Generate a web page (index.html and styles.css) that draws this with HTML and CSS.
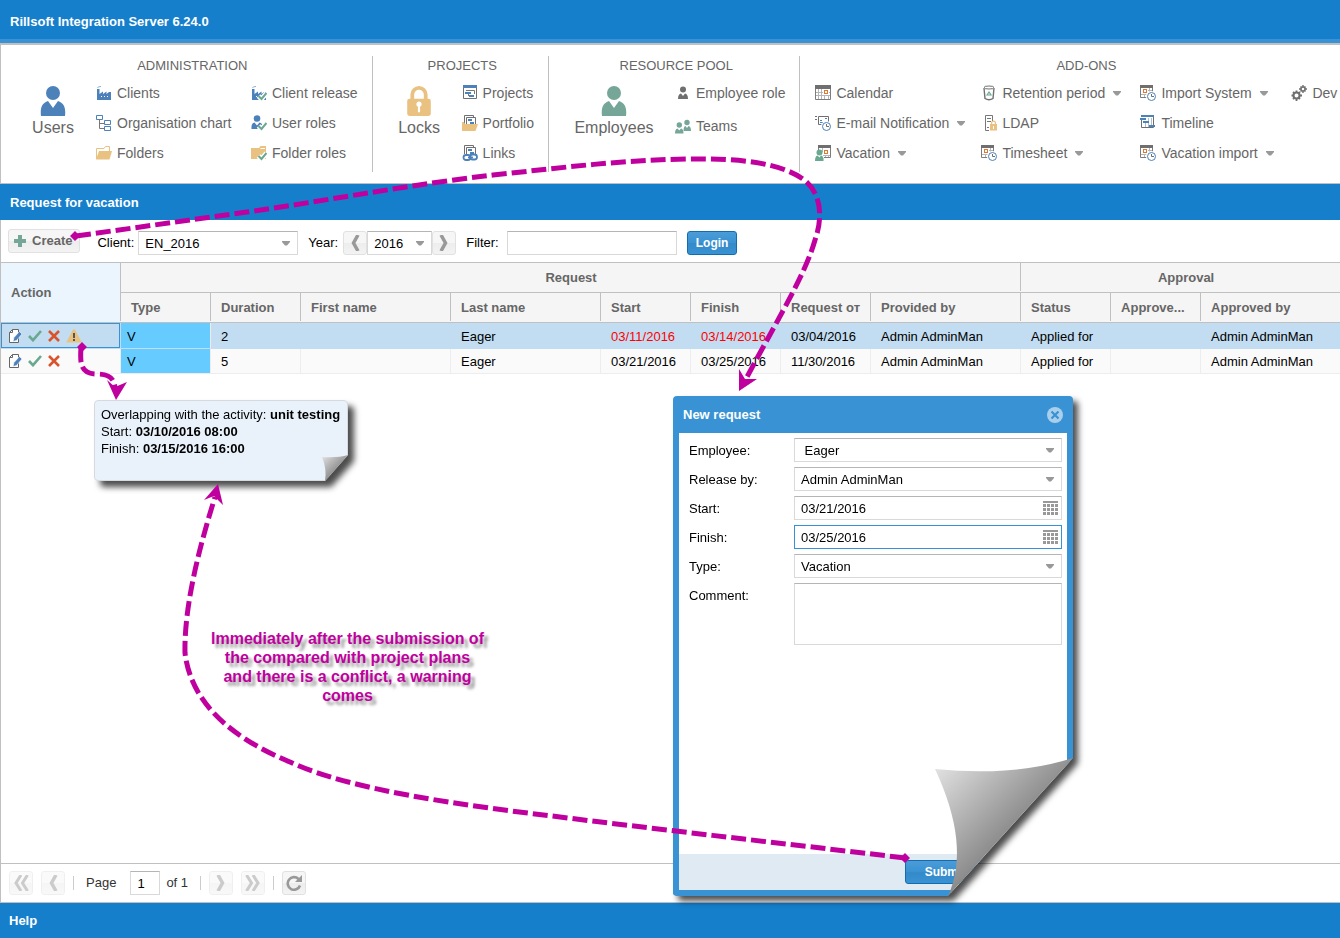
FILE: index.html
```html
<!DOCTYPE html>
<html lang="en">
<head>
<meta charset="utf-8">
<title>Rillsoft Integration Server</title>
<link rel="stylesheet" href="styles.css">
</head>
<body>
<svg class="sprite" aria-hidden="true">
  <symbol id="person" viewBox="0 0 26 30">
    <circle cx="13" cy="7" r="7"/>
    <path d="M1 30C0 22 2 17 8 15L13 22L18 15C24 17 26 22 25 30Q13 31 1 30Z"/>
  </symbol>
  <symbol id="lock" viewBox="0 0 22 28">
    <path d="M3 12V8A8 8 0 0 1 19 8V12H20Q22 12 22 14V26Q22 28 20 28H2Q0 28 0 26V14Q0 12 2 12ZM6.500 12H15.500V8A4.500 4.500 0 0 0 6.500 8ZM11 14.500A2.500 2.500 0 0 0 10 19.300V24.500H12V19.300A2.500 2.500 0 0 0 11 14.500Z" fill-rule="evenodd"/>
  </symbol>
  <symbol id="factory" viewBox="0 0 16 16">
    <path fill="#4c81ba" d="M1 15V4H3.500V9L7 6.500V9L10.500 6.500V9L13 7H15V15Z"/>
    <path fill="none" stroke="#8fb0d4" d="M1.500 3Q1.500 1.500 5 1.500"/>
    <path fill="#fff" d="M5 11H6V12H5ZM8 11H9V12H8ZM11 11H12V12H11Z"/>
  </symbol>
  <symbol id="tick" viewBox="0 0 16 16">
    <path fill="none" stroke="#fff" stroke-width="5" d="M7.500 11L10.500 14L15.500 8"/>
    <path fill="none" stroke="#6aa88f" stroke-width="2" d="M7.500 11L10.500 14L15.500 8"/>
  </symbol>
  <symbol id="tree" viewBox="0 0 16 16">
    <path fill="none" stroke="#777" d="M3.500 4V13.500H8M3.500 8.500H8"/>
    <path fill="#fff" stroke="#4c81ba" d="M.5 .5H6.500V4.500H.5ZM8.500 5.500H14.500V9.500H8.500ZM8.500 11.500H14.500V15.500H8.500Z"/>
  </symbol>
  <symbol id="folder" viewBox="0 0 16 16">
    <path fill="none" stroke="#e9c282" d="M.5 14V3.500H8L9.500 1.500H13.500V6"/>
    <path fill="#e9c282" d="M0 14.500L3 6H16L13.500 14.500Z"/>
  </symbol>
  <symbol id="folder-full" viewBox="0 0 16 16">
    <path fill="#e9c282" d="M0 14V3H8L9.500 1H15V14Z"/>
    <path fill="none" stroke="#fff" d="M9.500 3.500H14"/>
  </symbol>
  <symbol id="small-user" viewBox="0 0 16 16">
    <circle cx="6" cy="3.500" r="3.300"/>
    <path d="M.5 14Q0 8 3.500 7.500L6 10.500L8.500 7.500Q12 8 11.500 14Z"/>
  </symbol>
  <symbol id="project" viewBox="0 0 16 16">
    <path fill="#fff" stroke="#707070" d="M1.500 3V13.500H14.500V3"/>
    <path fill="#4c81ba" d="M1 0H15V3H1ZM3 7H9V9H3ZM7 10H12V12H7Z"/>
    <path fill="none" stroke="#777" d="M4 5.500H12.500V9M6.500 9V11"/>
  </symbol>
  <symbol id="docs" viewBox="0 0 16 16">
    <path fill="#fff" stroke="#707070" d="M2.500 10V.5H11.500V3M4.500 12V2.500H13.500V12Z"/>
    <path fill="#4c81ba" d="M6 4H10V6H6ZM8 7H12V9H8Z"/>
  </symbol>
  <symbol id="portfolio" viewBox="0 0 16 16">
    <use href="#docs"/>
    <path fill="#e9c282" d="M0 7H2L3 9H16L13.500 16H0Z"/>
  </symbol>
  <symbol id="links" viewBox="0 0 16 16">
    <use href="#docs"/>
    <path fill="none" stroke="#fff" stroke-width="7" d="M2 12.500H15"/>
    <g fill="none" stroke="#4c81ba" stroke-width="1.800"><rect x="1.500" y="10" width="7" height="5" rx="2.500"/><rect x="8" y="9.500" width="7" height="5" rx="2.500"/><path d="M6 12.500H11"/></g>
  </symbol>
  <symbol id="role" viewBox="0 0 16 16">
    <g fill="#6f6f6f"><circle cx="8" cy="4.500" r="3"/><path d="M3 14Q3 9 6 8.500L8 11L10 8.500Q13 9 13 14Z"/></g>
  </symbol>
  <symbol id="team" viewBox="0 0 16 16">
    <g fill="#75a697"><circle cx="4.300" cy="7" r="2.700"/><path d="M0 15.500Q0 11 2.500 10.500L4.300 12.500L6 10.500Q8.500 11 8.500 15.500Z"/><circle cx="12" cy="4.500" r="2.700"/><path d="M8.500 13Q8.500 8.500 10.500 8L12 10L13.500 8Q16 8.500 16 13Z"/></g>
  </symbol>
  <symbol id="calendar" viewBox="0 0 16 16">
    <path fill="#6f6f6f" d="M0 0H16V4H0Z"/>
    <path fill="none" stroke="#b5b5b5" d="M1 7.500H15M1 10.500H15M3.500 4V14M6.500 4V14M9.500 4V14M13.500 4V14"/>
    <path fill="none" stroke="#7c7c7c" d="M.5 4V14.500H15.500V4"/>
    <path fill="#fff" d="M8 4H14V10H8Z"/>
    <rect x="9.500" y="5.500" width="3" height="3" fill="#fff" stroke="#e0762f"/>
  </symbol>
  <symbol id="clock" viewBox="0 0 16 16">
    <circle cx="11.500" cy="11.500" r="5.500" fill="#fff"/>
    <circle cx="11.500" cy="11.500" r="4" fill="#fff" stroke="#4c81ba"/>
    <path fill="none" stroke="#6f6f6f" d="M11.500 9V11.500H14"/>
  </symbol>
  <symbol id="cal-clock" viewBox="0 0 16 16">
    <path fill="#6f6f6f" d="M0 0H13V3H0Z"/>
    <path fill="none" stroke="#7c7c7c" d="M.5 3V12.500H9M12.500 3V8"/>
    <path fill="none" stroke="#b5b5b5" d="M1 9.500H8M8 5.500H12M9.500 3V7M4.500 9V12M7.500 9V12"/>
    <rect x="3.500" y="4.500" width="3" height="3" fill="#fff" stroke="#e0762f"/>
    <use href="#clock"/>
  </symbol>
  <symbol id="mail" viewBox="0 0 16 16">
    <path stroke="#6f6f6f" d="M0 1.500H2M0 4.500H2"/>
    <path fill="#fff" stroke="#6f6f6f" d="M3.500 1.500H13.500V9.500H3.500Z"/>
    <path fill="none" stroke="#4c81ba" d="M5 5.500H7M5 7.500H8M10 3.500H12"/>
    <use href="#clock"/>
  </symbol>
  <symbol id="vac" viewBox="0 0 16 16">
    <path fill="#6f6f6f" d="M3 0H16V3H3Z"/>
    <path fill="none" stroke="#7c7c7c" d="M15.500 3V12.500H9M3.500 3V5"/>
    <path fill="none" stroke="#b5b5b5" d="M7.500 3V7M8 10.500H15M10.500 10V12M13.500 10V12"/>
    <rect x="9.500" y="5.500" width="3" height="3" fill="#fff" stroke="#e0762f"/>
    <g fill="#6aa88f"><circle cx="4.500" cy="7.500" r="3"/><path d="M0 16Q0 11 2.500 10.500L4.500 12.500L6 10.500Q9 11 8.500 16Z"/></g>
  </symbol>
  <symbol id="bin" viewBox="0 0 16 16">
    <path fill="none" stroke="#707070" stroke-width="1.400" d="M3 3L4 13.500Q8 16 12 13.500L13 3"/>
    <ellipse cx="8" cy="2.500" rx="5" ry="1.500" fill="#fff" stroke="#707070"/>
    <path fill="none" stroke="#6aa88f" stroke-width="1.200" d="M6 10L8 7L10 10Z"/>
  </symbol>
  <symbol id="ldap" viewBox="0 0 16 16">
    <path fill="none" stroke="#777" d="M11.500 6V.5H4.500V15.500H8"/>
    <path stroke="#777" d="M6 3.500H10M6 6.500H10M6 12.500H8"/>
    <path fill="#e9c282" d="M9 15.500V9H10V8A2.500 2.500 0 0 1 15 8V9H16V15.500ZM11.200 9H13.800V8A1.300 1.300 0 0 0 11.200 8ZM12 11V14H13V11Z" fill-rule="evenodd"/>
  </symbol>
  <symbol id="timeline" viewBox="0 0 16 16">
    <path fill="#fff" stroke="#6f6f6f" d="M1.500 5V12.500H13.500V2"/>
    <path fill="none" stroke="#a9bdd3" d="M5.500 8V12M8.500 3V12M11.500 3V12"/>
    <path fill="#4c81ba" d="M1 0H14V2H1ZM0 3H6V5H0ZM3 6H9V8H3ZM9 10H15V12H9Z"/>
  </symbol>
  <symbol id="gears" viewBox="0 0 16 16">
    <g fill="none" stroke="#6f6f6f"><circle cx="5.500" cy="10.500" r="3" stroke-width="2"/><path stroke-width="1.800" d="M5.500 5.500V7.500M5.500 13.500V16M.5 10.500H2.500M8.500 10.500H11M2 7L3.500 8.500M9 7L7.500 8.500M2 14L3.500 12.500M9 14L7.500 12.500"/><circle cx="12" cy="4" r="2" stroke-width="1.500"/><path stroke-width="1.400" d="M12 0V2M12 6V8M8 4H10M14 4H16M9.500 1.500L10.500 2.500M14.500 1.500L13.500 2.500M9.500 6.500L10.500 5.500M14.500 6.500L13.500 5.500"/></g>
  </symbol>
  <symbol id="arrow" viewBox="0 0 8 5"><path d="M0 0H8V1L5 4.500H3L0 1Z" fill="#999"/></symbol>
  <symbol id="chev" viewBox="0 0 16 16"><path fill="none" stroke="currentColor" stroke-width="3.500" d="M11 0L6.500 8L11 16"/></symbol>
  <symbol id="chev2" viewBox="0 0 16 16"><path fill="none" stroke="currentColor" stroke-width="3" d="M8 0L3 8L8 16M14.500 0L9.500 8L14.500 16"/></symbol>
  <symbol id="edit" viewBox="0 0 14 16">
    <path fill="#fff" stroke="#666" d="M4.500 1.500H10.500V14.500H1.500V4.500Z"/><path fill="none" stroke="#666" d="M4.500 1.500V4.500H1.500"/>
    <path fill="#4c81ba" stroke="#fff" stroke-width=".6" d="M5 13.500L6 9.500L11.500 3.500L14 6L8.500 12.500Z"/>
  </symbol>
  <symbol id="check" viewBox="0 0 14 12"><path fill="none" stroke="#6aa88f" stroke-width="2.600" d="M1 6L5 10.200L13 1"/></symbol>
  <symbol id="cross" viewBox="0 0 12 12"><path fill="none" stroke="#d9532c" stroke-width="2.600" d="M1 1L11 11M11 1L1 11"/></symbol>
  <symbol id="warn" viewBox="0 0 16 14"><path fill="#e9c282" d="M7 .5H9L15.800 13.500H.2Z"/><path fill="#555" d="M7 4H9V9H7ZM7 10H9V12H7Z"/></symbol>
  <symbol id="picker" viewBox="0 0 15 14">
    <path stroke="#999" stroke-width="2" d="M0 1H15"/><path stroke="#999" stroke-width="3" stroke-dasharray="3 1" d="M0 4.500H15M0 8.500H15M0 12.500H15"/>
  </symbol>
</svg>

<header class="bar bar-top"><h1 class="bar-title">Rillsoft Integration Server 6.24.0</h1></header>

<nav class="ribbon">
  <section class="group">
    <h2 class="group-title title-admin">Administration</h2>
    <div class="group-body cols-admin">
      <button class="big"><svg class="big-icon blue"><use href="#person"/></svg>Users</button>
      <button class="item"><svg class="icon"><use href="#factory"/></svg>Clients</button>
      <button class="item"><svg class="icon"><use href="#factory"/><use href="#tick"/></svg>Client release</button>
      <button class="item"><svg class="icon"><use href="#tree"/></svg>Organisation chart</button>
      <button class="item"><svg class="icon blue"><use href="#small-user"/><use href="#tick"/></svg>User roles</button>
      <button class="item"><svg class="icon"><use href="#folder"/></svg>Folders</button>
      <button class="item"><svg class="icon"><use href="#folder-full"/><use href="#tick"/></svg>Folder roles</button>
    </div>
  </section>
  <section class="group">
    <h2 class="group-title">Projects</h2>
    <div class="group-body cols-projects">
      <button class="big"><svg class="big-icon yellow"><use href="#lock"/></svg>Locks</button>
      <button class="item"><svg class="icon"><use href="#project"/></svg>Projects</button>
      <button class="item"><svg class="icon"><use href="#portfolio"/></svg>Portfolio</button>
      <button class="item"><svg class="icon"><use href="#links"/></svg>Links</button>
    </div>
  </section>
  <section class="group">
    <h2 class="group-title">Resource pool</h2>
    <div class="group-body cols-pool">
      <button class="big"><svg class="big-icon green"><use href="#person"/></svg>Employees</button>
      <button class="item"><svg class="icon"><use href="#role"/></svg>Employee role</button>
      <button class="item"><svg class="icon"><use href="#team"/></svg>Teams</button>
    </div>
  </section>
  <section class="group">
    <h2 class="group-title title-addons">Add-ons</h2>
    <div class="group-body cols-addons">
      <button class="item"><svg class="icon"><use href="#calendar"/></svg>Calendar</button>
      <button class="item"><svg class="icon"><use href="#bin"/></svg>Retention period<svg class="caret"><use href="#arrow"/></svg></button>
      <button class="item"><svg class="icon"><use href="#cal-clock"/></svg>Import System<svg class="caret"><use href="#arrow"/></svg></button>
      <button class="item"><svg class="icon"><use href="#gears"/></svg>Dev</button>
      <button class="item first"><svg class="icon"><use href="#mail"/></svg>E-mail Notification<svg class="caret"><use href="#arrow"/></svg></button>
      <button class="item"><svg class="icon"><use href="#ldap"/></svg>LDAP</button>
      <button class="item"><svg class="icon"><use href="#timeline"/></svg>Timeline</button>
      <button class="item first"><svg class="icon"><use href="#vac"/></svg>Vacation<svg class="caret"><use href="#arrow"/></svg></button>
      <button class="item"><svg class="icon"><use href="#cal-clock"/></svg>Timesheet<svg class="caret"><use href="#arrow"/></svg></button>
      <button class="item"><svg class="icon"><use href="#cal-clock"/></svg>Vacation import<svg class="caret"><use href="#arrow"/></svg></button>
    </div>
  </section>
</nav>

<div class="bar"><h2 class="bar-title">Request for vacation</h2></div>

<main class="panel">
  <form class="toolbar">
    <button type="button" class="btn create"><svg class="plus" viewBox="0 0 12 12"><path fill="#75a697" d="M4 0H8V4H12V8H8V12H4V8H0V4H4Z"/></svg>Create</button>
    <div class="filters">
      <label for="client">Client:</label>
      <span class="field client"><select id="client"><option>EN_2016</option></select><svg class="caret"><use href="#arrow"/></svg></span>
      <label for="year">Year:</label>
      <span class="year">
        <button type="button" class="btn square" aria-label="Previous year"><svg class="chev"><use href="#chev"/></svg></button>
        <span class="field year-field"><select id="year"><option>2016</option></select><svg class="caret"><use href="#arrow"/></svg></span>
        <button type="button" class="btn square" aria-label="Next year"><svg class="chev flip"><use href="#chev"/></svg></button>
      </span>
      <label for="filter">Filter:</label>
      <span class="field filter"><input id="filter" type="text"></span>
      <button type="button" class="btn-primary">Login</button>
    </div>
  </form>

  <div class="grid">
    <table class="requests">
      <colgroup><col class="c-action"><col class="c-s"><col class="c-s"><col class="c-l"><col class="c-l"><col class="c-s"><col class="c-s"><col class="c-s"><col class="c-l"><col class="c-s"><col class="c-s"><col class="c-l"></colgroup>
      <thead>
        <tr><th rowspan="2" class="action-head">Action</th><th colspan="8" class="span-head">Request</th><th colspan="3" class="span-head">Approval</th></tr>
        <tr><th>Type</th><th>Duration</th><th>First name</th><th>Last name</th><th>Start</th><th>Finish</th><th>Request oт</th><th>Provided by</th><th>Status</th><th>Approve...</th><th>Approved by</th></tr>
      </thead>
      <tbody>
        <tr class="selected">
          <td class="actions"><div class="action-list"><button aria-label="Edit"><svg class="i-edit"><use href="#edit"/></svg></button><button aria-label="Approve"><svg class="i-check"><use href="#check"/></svg></button><button aria-label="Reject"><svg class="i-cross"><use href="#cross"/></svg></button><button aria-label="Warning"><svg class="i-warn"><use href="#warn"/></svg></button></div></td>
          <td class="type">V</td><td>2</td><td></td><td>Eager</td><td class="late">03/11/2016</td><td class="late">03/14/2016</td><td>03/04/2016</td><td>Admin AdminMan</td><td>Applied for</td><td></td><td>Admin AdminMan</td>
        </tr>
        <tr>
          <td class="actions"><div class="action-list"><button aria-label="Edit"><svg class="i-edit"><use href="#edit"/></svg></button><button aria-label="Approve"><svg class="i-check"><use href="#check"/></svg></button><button aria-label="Reject"><svg class="i-cross"><use href="#cross"/></svg></button></div></td>
          <td class="type">V</td><td>5</td><td></td><td>Eager</td><td>03/21/2016</td><td>03/25/2016</td><td>11/30/2016</td><td>Admin AdminMan</td><td>Applied for</td><td></td><td>Admin AdminMan</td>
        </tr>
      </tbody>
    </table>
  </div>

  <div class="paging">
    <button class="btn square" disabled aria-label="First page"><svg class="chev"><use href="#chev2"/></svg></button>
    <button class="btn square" disabled aria-label="Previous page"><svg class="chev"><use href="#chev"/></svg></button>
    <span class="sep"></span>
    <label for="page">Page</label>
    <span class="field page-field"><input id="page" type="text" value="1"></span>
    <span class="page-count">of 1</span>
    <span class="sep"></span>
    <button class="btn square" disabled aria-label="Next page"><svg class="chev flip"><use href="#chev"/></svg></button>
    <button class="btn square" disabled aria-label="Last page"><svg class="chev flip"><use href="#chev2"/></svg></button>
    <span class="sep"></span>
    <button class="btn square" aria-label="Refresh"><svg class="chev" viewBox="0 0 16 16"><path fill="none" stroke="#999" stroke-width="2.600" d="M12.500 4A6.300 6.300 0 1 0 14 10.500"/><path fill="#999" d="M16 0V7H9Z"/></svg></button>
  </div>
</main>

<footer class="bar bar-help"><a class="bar-title" href="#help">Help</a></footer>

<aside class="note">
  <div class="note-paper">
    <p>Overlapping with the activity: <b>unit testing</b></p>
    <p>Start: <b>03/10/2016 08:00</b></p>
    <p>Finish: <b>03/15/2016 16:00</b></p>
  </div>
  <svg class="note-curl" viewBox="0 0 26 26"><defs><linearGradient id="g1" x1="0" y1="0" x2=".6" y2=".6"><stop offset="0" stop-color="#e6e6e6"/><stop offset="1" stop-color="#8c8c8c"/></linearGradient></defs><path fill="url(#g1)" d="M0 2Q16 3 26 0L3 26Q5 14 0 2Z"/></svg>
</aside>

<section class="dialog" role="dialog" aria-labelledby="dialog-title">
  <div class="dialog-frame">
    <div class="dialog-head"><h2 id="dialog-title" class="bar-title">New request</h2><button class="close" aria-label="Close"><svg class="close-icon" viewBox="0 0 16 16"><circle cx="8" cy="8" r="8" fill="#a9cfed"/><path stroke="#3892d3" stroke-width="2.200" d="M4.500 4.500L11.500 11.500M11.500 4.500L4.500 11.500"/></svg></button></div>
    <form class="dialog-form">
      <label for="employee">Employee:</label>
      <span class="field"><select id="employee"><option>&nbsp;Eager</option></select><svg class="caret"><use href="#arrow"/></svg></span>
      <label for="release">Release by:</label>
      <span class="field"><select id="release"><option>Admin AdminMan</option></select><svg class="caret"><use href="#arrow"/></svg></span>
      <label for="start">Start:</label>
      <span class="field"><input id="start" type="text" value="03/21/2016"><svg class="picker"><use href="#picker"/></svg></span>
      <label for="finish">Finish:</label>
      <span class="field focused"><input id="finish" type="text" value="03/25/2016"><svg class="picker"><use href="#picker"/></svg></span>
      <label for="type">Type:</label>
      <span class="field"><select id="type"><option>Vacation</option></select><svg class="caret"><use href="#arrow"/></svg></span>
      <label for="comment">Comment:</label>
      <textarea id="comment" class="comment"></textarea>
    </form>
    <div class="dialog-foot"><button class="btn-primary submit">Submit</button></div>
  </div>
  <svg class="dialog-curl" viewBox="0 0 138 138"><defs><linearGradient id="g2" x1="0" y1="0" x2=".55" y2=".55"><stop offset="0" stop-color="#e8e8e8"/><stop offset="1" stop-color="#8a8a8a"/></linearGradient></defs><path fill="url(#g2)" d="M0 11Q78 19 138 0L13 138Q36 88 0 11Z"/></svg>
</section>

<p class="remark">Immediately after the submission of<br>the compared with project plans<br>and there is a conflict, a warning<br>comes</p>

<svg class="arrows" aria-hidden="true">
  <g fill="none" stroke="#c0009e" stroke-width="5" stroke-dasharray="15 5">
    <path d="M76 236L247 212C330 200 415 184 493 175C560 168 620 160 687 159C740 158 780 163 803 179C820 191 824 215 815 240C805 275 780 315 747 377"/>
    <path d="M81 347C80 362 80 374 96 374C108 374 114 377 115 388"/>
    <path d="M905 858C780 843 680 832 560 817C460 805 350 790 290 762C220 733 190 695 185 653C184 605 200 545 215 497"/>
  </g>
  <g fill="#c0009e">
    <path d="M75 231L80 236L75 241L70 236ZM82 342L87 347L82 352L77 347ZM905 853L910 858L905 863L900 858Z"/>
    <path d="M739 391L739 369L745 379L757 379ZM116 400L107 380L115 387L127 382ZM218 484L204 500L214 496L223 505Z"/>
  </g>
</svg>
</body>
</html>
```
FILE: styles.css
```css
* { box-sizing: border-box; }

body {
  position: relative;
  display: flex;
  flex-direction: column;
  min-height: 100vh;
  margin: 0;
  overflow: hidden;
  background: #fff;
  color: #000;
  font: 13px/16px "Liberation Sans", Arial, sans-serif;
}

button, input, select, textarea { margin: 0; font: inherit; color: inherit; }
h1, h2, p { margin: 0; }
svg { display: block; flex: none; }
.sprite { position: absolute; width: 0; height: 0; }

.blue { fill: #4c81ba; }
.yellow { fill: #e9c282; }
.green { fill: #75a697; }

/* coloured bars */
.bar { display: flex; align-items: center; height: 36px; padding: 1px 10px 0; background: #157fcc; color: #fff; }
.bar-top { height: 43px; padding-top: 5px; border-bottom: 4px solid #3892d3; }
.bar-title { font-size: 13px; line-height: 16px; font-weight: bold; color: #fff; text-decoration: none; }
.bar-help { height: 35px; padding-left: 9px; }

/* ribbon */
.ribbon {
  display: flex;
  padding: 11px 0;
  overflow: hidden;
  border: solid #c0c0c0;
  border-width: 2px 0 1px 1px;
  color: #666;
}
.group { flex: none; height: 116px; border-right: 1px solid #c0c0c0; }
.group-title { padding-left: 4px; font-size: 13px; line-height: 20px; font-weight: normal; text-align: center; text-transform: uppercase; }
.title-admin { padding-left: 12px; }
.title-addons { padding-left: 0; }
.group-body { display: grid; grid-template-rows: 30px 30px 30px; padding: 2px 14px 0 0; }
.cols-admin { grid-template-columns: 95px 155px auto; }
.cols-projects { grid-template-columns: 89px auto; }
.cols-pool { grid-template-columns: 126px auto; grid-template-rows: 30px 36px; }
.cols-addons { grid-template-columns: 166px 159px 151px auto; padding: 2px 35px 0 15px; }
.first { grid-column: 1; }
.item, .big { display: flex; align-items: center; padding: 0; border: 0; background: none; white-space: nowrap; cursor: pointer; }
.item { gap: 5px; font-size: 14px; }
.icon { width: 16px; height: 16px; }
.item .caret { margin-left: 3px; }
.big { grid-row: 1 / 4; flex-direction: column; gap: 3px; padding: 8px 0 0 9px; font-size: 16px; line-height: 18px; }
.cols-projects .big { padding-left: 4px; }
.cols-pool .big { padding-left: 4px; grid-row: 1 / 3; }
.big-icon { width: 26px; height: 30px; }
.caret { width: 8px; height: 5px; }

/* controls */
.field { display: grid; align-items: center; height: 24px; border: 1px solid #d9d9d9; border-top-color: #b5b5b5; background: #fff; }
.field > * { grid-area: 1 / 1; }
.field input, .field select { width: 100%; height: 22px; padding: 0 6px; border: 0; outline: 0; border-radius: 0; background: none; appearance: none; }
.field select { padding-top: 1px; }
.field .caret, .picker { justify-self: end; margin-right: 7px; pointer-events: none; }
.picker { width: 15px; height: 14px; }
.field .picker { margin-right: 3px; }
.focused { border-color: #3892d3; }
.btn {
  display: flex; align-items: center; justify-content: center;
  height: 24px; padding: 0 8px;
  border: 1px solid #e1e1e1; border-radius: 3px;
  background: linear-gradient(#f6f6f6 50%, #ededed 50%, #f3f3f3);
  color: #666; font-weight: bold;
}
.square { width: 24px; padding: 0; color: #999; }
.square:disabled { opacity: .5; }
.chev { width: 16px; height: 16px; }
.flip { transform: scaleX(-1); }
.btn-primary {
  height: 24px; padding: 0 8px;
  border: 1px solid #126daf; border-radius: 3px;
  background: linear-gradient(#4b9cd7, #3892d3 50%, #358ac8 51%, #3892d3);
  color: #fff; font-size: 12px; font-weight: bold;
}

/* vacation panel */
.panel { display: flex; flex: 1; flex-direction: column; border: solid #c0c0c0; border-width: 0 0 1px 1px; }
.toolbar { display: flex; align-items: flex-start; gap: 17px; height: 42px; padding: 9px 7px 0; }
.create { gap: 6px; padding: 0 7px 0 5px; }
.plus { width: 12px; height: 12px; }
.filters { display: flex; align-items: center; gap: 10px; padding-top: 2px; }
.filters label { margin-right: -6px; }
.filters label[for="year"] { margin-right: -5px; }
.filters label[for="filter"] { margin-right: -2px; }
.year { display: flex; }
.client { width: 160px; }
.year-field { width: 65px; }
.filter { width: 170px; }

.grid { flex: 1; overflow: hidden; border-top: 1px solid #c0c0c0; }
.requests { width: 1350px; table-layout: fixed; border-spacing: 0; }
.c-action { width: 120px; }
.c-s { width: 90px; }
.c-l { width: 150px; }
.requests th, .requests td { overflow: hidden; padding: 0 10px; text-align: left; white-space: nowrap; }
.requests th {
  height: 30px;
  border-bottom: 1px solid #c0c0c0;
  background: linear-gradient(#c0c0c0, #c0c0c0) right top / 1px calc(100% - 1px) no-repeat #f5f5f5;
  color: #666;
}
.requests th.span-head { text-align: center; }
.requests th.action-head { background-color: #ebf5fe; }
.requests td { height: 25px; padding-top: 2px; border: solid #ededed; border-width: 0 1px 1px 0; background: #fafafa; }
.requests .selected td { height: 26px; border-color: #c2ddf1; background: #c2ddf1; }
.requests td.type, .requests .selected td.type { padding-left: 6px; border-right-color: #ededed; background: #66ccff; background-clip: padding-box; }
.requests td.actions { padding: 0; }
.requests .late { color: #f00; }
.action-list { display: flex; align-items: center; gap: 6px; height: 24px; padding-left: 6px; border: 1px solid transparent; }
.selected .action-list { height: 25px; border-color: #3892d3; }
.action-list button { padding: 0; border: 0; background: none; }
.i-edit { width: 14px; height: 16px; }
.i-check { width: 14px; height: 12px; }
.i-cross { width: 12px; height: 12px; }
.i-warn { width: 16px; height: 14px; }

.paging { display: flex; align-items: center; gap: 8px; height: 39px; padding-left: 8px; border-top: 1px solid #c0c0c0; color: #333; }
.sep { width: 1px; height: 14px; background: #ccc; }
.paging label { padding: 0 6px 0 4px; }
.page-field { width: 30px; color: #000; }
.page-count { margin: 0 4px 0 -2px; }

/* overlapping warning note */
.note { position: absolute; left: 94px; top: 400px; filter: drop-shadow(6px 6px 3px rgba(0, 0, 0, .7)); }
.note-paper {
  width: 254px; padding: 5px 6px 23px; line-height: 17px; white-space: nowrap;
  border: 1px solid #d6dade; border-radius: 4px; background: #e9f2fb;
  clip-path: polygon(0 0, 100% 0, 100% calc(100% - 26px), calc(100% - 23px) 100%, 0 100%);
}
.note-curl { position: absolute; right: 0; bottom: 0; width: 26px; height: 26px; }

/* new request dialog */
.dialog { position: absolute; left: 673px; top: 396px; filter: drop-shadow(5px 5px 3px rgba(0, 0, 0, .7)); }
.dialog-frame {
  display: flex; flex-direction: column; width: 400px; height: 500px;
  border: 6px solid #3892d3; border-top-width: 0; border-radius: 4px; background: #fff;
  clip-path: polygon(0 0, 100% 0, 100% calc(100% - 138px), calc(100% - 125px) 100%, 0 100%);
}
.dialog-head { display: flex; align-items: center; justify-content: space-between; height: 37px; padding: 0 4px; background: #3892d3; }
.close { padding: 0; border: 0; background: none; }
.close-icon { width: 16px; height: 16px; }
.dialog-form { display: grid; flex: 1; grid-template-columns: 105px 1fr; align-content: start; gap: 5px 0; padding: 5px 5px 0 10px; }
.dialog-form label { padding-top: 1px; line-height: 23px; }
.comment { height: 62px; border: 1px solid #d9d9d9; border-top-color: #b5b5b5; resize: none; outline: 0; }
.dialog-foot { height: 36px; padding: 6px 0 0 226px; background: #dfeaf2; }
.submit { width: 80px; }
.dialog-curl { position: absolute; right: 0; bottom: 0; width: 138px; height: 138px; }

/* annotations */
.remark {
  position: absolute; left: 207px; top: 629px; width: 281px;
  color: #c0009e; font-size: 16px; line-height: 19px; font-weight: bold; text-align: center;
  text-shadow: 4px 4px 3px rgba(0, 0, 0, .4);
}
.arrows { position: absolute; left: 0; top: 0; width: 100%; height: 100%; pointer-events: none; }
```
